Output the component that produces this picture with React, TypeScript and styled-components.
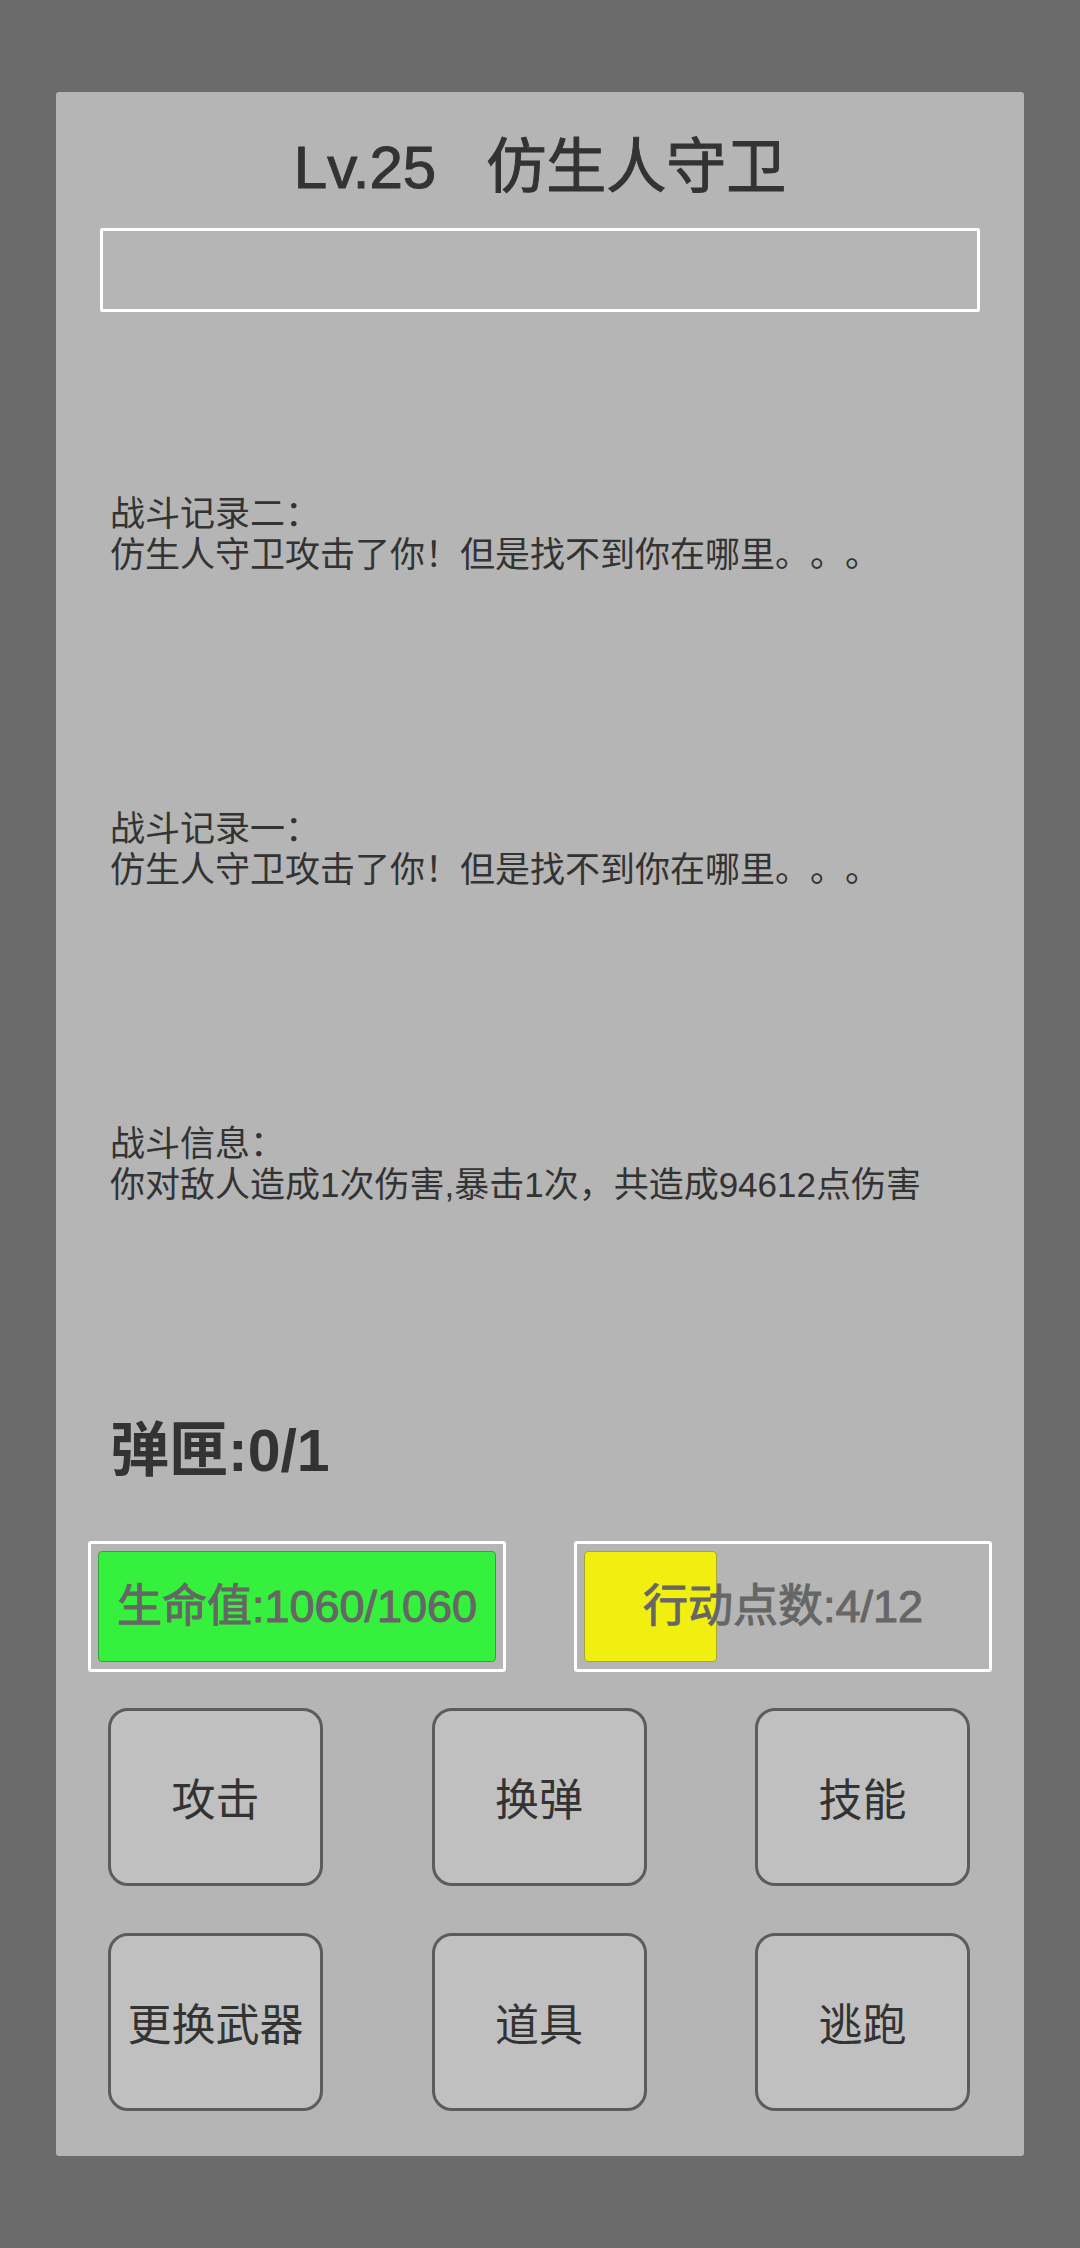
import styled, { createGlobalStyle } from "styled-components"

const Global = createGlobalStyle`
  html, body {
    margin: 0;
    padding: 0;
    background: #6b6b6b;
  }
  body {
    font-family: "Liberation Sans", "Noto Sans CJK SC", sans-serif;
    color: #333;
    text-spacing-trim: space-all;
  }
`

const Screen = styled.div`
  width: 1080px;
  min-height: 2248px;
  padding-top: 92px;
  box-sizing: border-box;
`

const Panel = styled.div`
  margin: 0 56px;
  background: #b5b5b5;
  border-radius: 3px;
  padding: 40px 0 45px;
  display: flex;
  flex-direction: column;
`

const Title = styled.h1`
  margin: 0;
  font-size: 60px;
  line-height: 72px;
  font-weight: 400;
  text-align: center;
  color: #333;
  white-space: pre;
  -webkit-text-stroke: 1px #333;
`

const NameBox = styled.div`
  margin: 24px 44px 0;
  height: 84px;
  border: 3px solid #fff;
  border-radius: 2px;
  box-sizing: border-box;
`

const Log = styled.div`
  margin-top: 181px;
  padding-left: 54px;
  display: flex;
  flex-direction: column;
  gap: 233px;
`

const Entry = styled.p`
  margin: 0;
  font-size: 35px;
  line-height: 41px;
  color: #333;
`

const Ammo = styled.div`
  margin-top: 211px;
  padding-left: 54px;
  font-size: 59px;
  line-height: 70px;
  font-weight: 700;
  color: #333;
`

const Bars = styled.div`
  margin-top: 55px;
  padding: 0 32px;
  display: flex;
  justify-content: space-between;
`

const Bar = styled.div`
  width: 418px;
  height: 131px;
  box-sizing: border-box;
  border: 3px solid #fff;
  border-radius: 3px;
  padding: 7px;
  display: grid;
`

const Fill = styled.div<{ $color: string; $edge: string }>`
  grid-area: 1 / 1;
  align-self: stretch;
  background: ${(p) => p.$color};
  border: 1px solid ${(p) => p.$edge};
  border-radius: 4px;
  box-sizing: border-box;
`

const BarLabel = styled.span`
  grid-area: 1 / 1;
  align-self: center;
  justify-self: center;
  font-size: 45px;
  line-height: 1;
  color: #666;
  -webkit-text-stroke: 1px #666;
  white-space: nowrap;
  position: relative;
`

const Buttons = styled.div`
  margin-top: 36px;
  padding: 0 54px 0 52px;
  display: grid;
  grid-template-columns: repeat(3, 215px);
  justify-content: space-between;
  row-gap: 47px;
`

const Button = styled.button`
  height: 178px;
  background: #c0c0c0;
  border: 3px solid #5c5c5c;
  border-radius: 20px;
  font-family: "Liberation Sans", "Noto Sans CJK SC", sans-serif;
  font-size: 44px;
  color: #333;
  padding: 0;
  display: flex;
  align-items: center;
  justify-content: center;
  white-space: nowrap;
`

const log = [
  ["战斗记录二：", "仿生人守卫攻击了你！但是找不到你在哪里。。。"],
  ["战斗记录一：", "仿生人守卫攻击了你！但是找不到你在哪里。。。"],
  ["战斗信息：", "你对敌人造成1次伤害,暴击1次，共造成94612点伤害"],
]

const actions = ["攻击", "换弹", "技能", "更换武器", "道具", "逃跑"]

const hp = { cur: 1060, max: 1060 }
const ap = { cur: 4, max: 12 }

const App = () => (
  <Screen>
    <Global />
    <Panel>
      <Title>{"Lv.25   仿生人守卫"}</Title>
      <NameBox />
      <Log>
        {log.map(([head, body], i) => (
          <Entry key={i}>
            {head}
            <br />
            {body}
          </Entry>
        ))}
      </Log>
      <Ammo>弹匣:0/1</Ammo>
      <Bars>
        <Bar>
          <Fill $color="#36f03e" $edge="#3c9e42" style={{ width: `${(hp.cur / hp.max) * 100}%` }} />
          <BarLabel>生命值:{hp.cur}/{hp.max}</BarLabel>
        </Bar>
        <Bar>
          <Fill $color="#f0ef10" $edge="#a8a530" style={{ width: `${(ap.cur / ap.max) * 100}%` }} />
          <BarLabel>行动点数:{ap.cur}/{ap.max}</BarLabel>
        </Bar>
      </Bars>
      <Buttons>
        {actions.map((a) => (
          <Button key={a}>{a}</Button>
        ))}
      </Buttons>
    </Panel>
  </Screen>
)

export default App
